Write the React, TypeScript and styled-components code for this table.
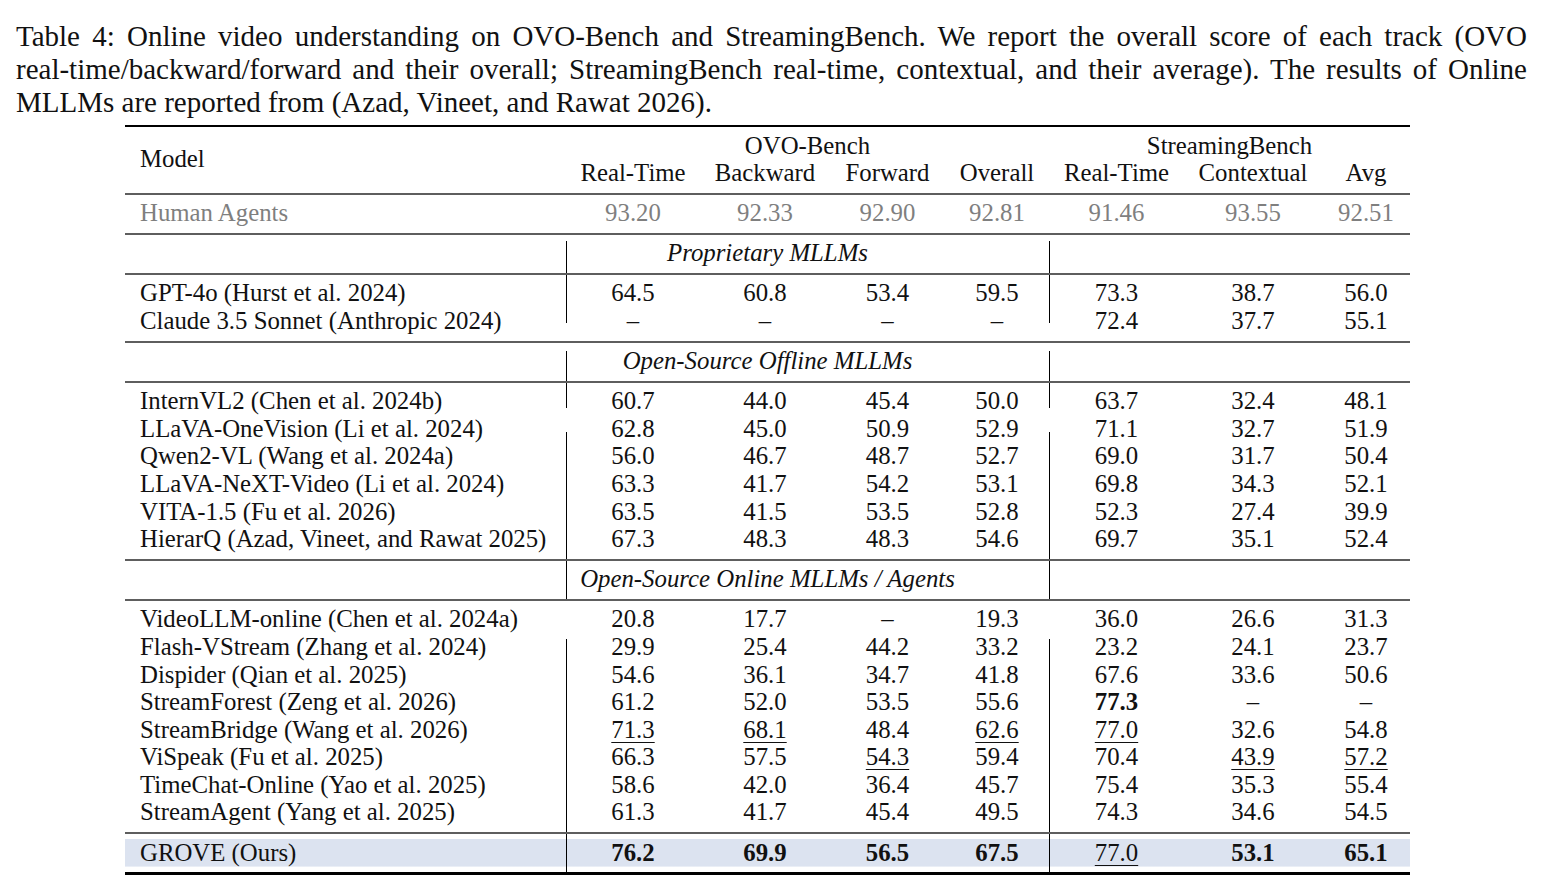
import React from 'react'
import styled, { createGlobalStyle, css } from 'styled-components'

const COLS = '441px 134px 130px 115px 104px 135px 138px 88px'
const ROW_H = 27.6
const PAD_TOP = 4.5
const PAD_BOTTOM = 6

const GlobalStyle = createGlobalStyle`
  body {
    margin: 0;
    background: #fff;
  }
`

const Page = styled.div`
  padding: 19.5px 15px 0 16px;
  font-family: 'Liberation Serif', 'Times New Roman', serif;
  color: #111;
`
const Caption = styled.div`
  width: 1511px;
  font-size: 29px;
  line-height: 33px;
`
const CaptionLine = styled.div<{ $justify?: boolean }>`
  ${props =>
    props.$justify
      ? css`
          text-align: justify;
          text-align-last: justify;
          word-spacing: -3px;
        `
      : css`
          text-align: left;
        `}
`
const Table = styled.div`
  margin: 6.5px 0 0 109px;
  width: 1285px;
  border-top: 2px solid #000;
  border-bottom: 3px solid #000;
  font-size: 24.8px;
`
const Block = styled.div<{ $last?: boolean }>`
  border-bottom: ${props => (props.$last ? 'none' : '2px solid #5e5e5e')};
`
const HeadGrid = styled.div`
  display: grid;
  grid-template-columns: ${COLS};
  grid-template-rows: ${ROW_H}px ${ROW_H}px;
  padding: ${PAD_TOP}px 0 ${PAD_BOTTOM}px;
  line-height: ${ROW_H}px;
  text-align: center;
  white-space: nowrap;
`
const ModelHead = styled.div`
  grid-row: 1 / span 2;
  align-self: center;
  text-align: left;
  padding-left: 15px;
`
const GroupHead = styled.div<{ $span: number }>`
  grid-column: span ${props => props.$span};
`
const Row = styled.div<{ $pt: number; $pb: number; $band?: boolean; $muted?: boolean }>`
  display: grid;
  grid-template-columns: ${COLS};
  color: ${props => (props.$muted ? '#7f7f7f' : 'inherit')};
  & > * {
    padding-top: ${props => props.$pt}px;
    padding-bottom: ${props => props.$pb}px;
  }
  ${props =>
    props.$band &&
    css`
      background: linear-gradient(#dce3f0, #dce3f0) no-repeat 0 ${props.$pt}px / 100% ${ROW_H}px;
    `}
`
const Cell = styled.div<{
  $left?: boolean
  $line?: boolean
  $gapTop?: number
  $gapBottom?: number
  $span?: number
  $italic?: boolean
  $shift?: number
}>`
  height: ${ROW_H}px;
  line-height: ${ROW_H}px;
  white-space: nowrap;
  text-align: ${props => (props.$left ? 'left' : 'center')};
  padding-left: ${props => (props.$left ? '15px' : '0')};
  padding-right: ${props => props.$shift || 0}px;
  font-style: ${props => (props.$italic ? 'italic' : 'normal')};
  ${props => props.$span && `grid-column: span ${props.$span};`}
  ${props =>
    props.$line &&
    css`
      background: linear-gradient(#000, #000) no-repeat 0 ${props.$gapTop || 0}px /
        1.4px calc(100% - ${(props.$gapTop || 0) + (props.$gapBottom || 0)}px);
    `}
`
const Strong = styled.span`
  font-weight: 700;
`
const Under = styled.span`
  text-decoration: underline;
  text-decoration-thickness: 1.3px;
  text-underline-offset: 4px;
`

type Entry = { name: string; vals: string[]; gapTop?: number; gapBottom?: number; noLine?: boolean }
type Group = { title: string; titleGap: number; rows: Entry[] }

const groups: Group[] = [
  {
    title: 'Proprietary MLLMs',
    titleGap: 6,
    rows: [
      { name: 'GPT-4o (Hurst et al. 2024)', vals: ['64.5', '60.8', '53.4', '59.5', '73.3', '38.7', '56.0'] },
      {
        name: 'Claude 3.5 Sonnet (Anthropic 2024)',
        vals: ['–', '–', '–', '–', '72.4', '37.7', '55.1'],
        gapBottom: 18,
      },
    ],
  },
  {
    title: 'Open-Source Offline MLLMs',
    titleGap: 8,
    rows: [
      {
        name: 'InternVL2 (Chen et al. 2024b)',
        vals: ['60.7', '44.0', '45.4', '50.0', '63.7', '32.4', '48.1'],
        gapBottom: 7,
      },
      {
        name: 'LLaVA-OneVision (Li et al. 2024)',
        vals: ['62.8', '45.0', '50.9', '52.9', '71.1', '32.7', '51.9'],
        gapTop: 17,
      },
      { name: 'Qwen2-VL (Wang et al. 2024a)', vals: ['56.0', '46.7', '48.7', '52.7', '69.0', '31.7', '50.4'] },
      {
        name: 'LLaVA-NeXT-Video (Li et al. 2024)',
        vals: ['63.3', '41.7', '54.2', '53.1', '69.8', '34.3', '52.1'],
      },
      { name: 'VITA-1.5 (Fu et al. 2026)', vals: ['63.5', '41.5', '53.5', '52.8', '52.3', '27.4', '39.9'] },
      {
        name: 'HierarQ (Azad, Vineet, and Rawat 2025)',
        vals: ['67.3', '48.3', '48.3', '54.6', '69.7', '35.1', '52.4'],
      },
    ],
  },
  {
    title: 'Open-Source Online MLLMs / Agents',
    titleGap: 0,
    rows: [
      {
        name: 'VideoLLM-online (Chen et al. 2024a)',
        vals: ['20.8', '17.7', '–', '19.3', '36.0', '26.6', '31.3'],
        noLine: true,
      },
      {
        name: 'Flash-VStream (Zhang et al. 2024)',
        vals: ['29.9', '25.4', '44.2', '33.2', '23.2', '24.1', '23.7'],
        gapTop: 6,
      },
      { name: 'Dispider (Qian et al. 2025)', vals: ['54.6', '36.1', '34.7', '41.8', '67.6', '33.6', '50.6'] },
      {
        name: 'StreamForest (Zeng et al. 2026)',
        vals: ['61.2', '52.0', '53.5', '55.6', '**77.3**', '–', '–'],
      },
      {
        name: 'StreamBridge (Wang et al. 2026)',
        vals: ['_71.3_', '_68.1_', '48.4', '_62.6_', '_77.0_', '32.6', '54.8'],
      },
      { name: 'ViSpeak (Fu et al. 2025)', vals: ['66.3', '57.5', '_54.3_', '59.4', '70.4', '_43.9_', '_57.2_'] },
      {
        name: 'TimeChat-Online (Yao et al. 2025)',
        vals: ['58.6', '42.0', '36.4', '45.7', '75.4', '35.3', '55.4'],
      },
      {
        name: 'StreamAgent (Yang et al. 2025)',
        vals: ['61.3', '41.7', '45.4', '49.5', '74.3', '34.6', '54.5'],
      },
    ],
  },
]

const human = ['93.20', '92.33', '92.90', '92.81', '91.46', '93.55', '92.51']
const ours = ['**76.2**', '**69.9**', '**56.5**', '**67.5**', '_77.0_', '**53.1**', '**65.1**']

const Value: React.FC<{ raw: string }> = ({ raw }) => {
  if (raw.startsWith('**')) return <Strong>{raw.slice(2, -2)}</Strong>
  if (raw.startsWith('_')) return <Under>{raw.slice(1, -1)}</Under>
  return <>{raw}</>
}

// the two ruled columns are the first of each benchmark
const ruled = (i: number) => i === 0 || i === 4

const DataRow: React.FC<{ entry: Entry; pt: number; pb: number; band?: boolean; muted?: boolean }> = ({
  entry,
  pt,
  pb,
  band,
  muted,
}) => (
  <Row $pt={pt} $pb={pb} $band={band} $muted={muted}>
    <Cell $left>{entry.name}</Cell>
    {entry.vals.map((v, i) => (
      <Cell
        key={i}
        $line={!muted && !entry.noLine && ruled(i)}
        $gapTop={entry.gapTop}
        $gapBottom={entry.gapBottom}
      >
        <Value raw={v} />
      </Cell>
    ))}
  </Row>
)

const App: React.FC = () => (
  <Page>
    <GlobalStyle />
    <Caption>
      <CaptionLine $justify>
        Table 4: Online video understanding on OVO-Bench and StreamingBench. We report the overall score of each
        track (OVO
      </CaptionLine>
      <CaptionLine $justify>
        real-time/backward/forward and their overall; StreamingBench real-time, contextual, and their average). The
        results of Online
      </CaptionLine>
      <CaptionLine>MLLMs are reported from (Azad, Vineet, and Rawat 2026).</CaptionLine>
    </Caption>

    <Table>
      <Block>
        <HeadGrid>
          <ModelHead>Model</ModelHead>
          <GroupHead $span={4}>OVO-Bench</GroupHead>
          <GroupHead $span={3}>StreamingBench</GroupHead>
          {['Real-Time', 'Backward', 'Forward', 'Overall', 'Real-Time', 'Contextual', 'Avg'].map((h, i) => (
            <div key={i}>{h}</div>
          ))}
        </HeadGrid>
      </Block>

      <Block>
        <DataRow entry={{ name: 'Human Agents', vals: human }} pt={PAD_TOP} pb={PAD_BOTTOM} muted />
      </Block>

      {groups.map(g => (
        <React.Fragment key={g.title}>
          <Block>
            <Row $pt={PAD_TOP} $pb={PAD_BOTTOM}>
              <Cell />
              <Cell $span={4} $italic $shift={80} $line $gapTop={g.titleGap}>
                {g.title}
              </Cell>
              <Cell $span={3} $line $gapTop={g.titleGap} />
            </Row>
          </Block>
          <Block>
            {g.rows.map((r, i) => (
              <DataRow
                key={r.name}
                entry={r}
                pt={i === 0 ? PAD_TOP : 0}
                pb={i === g.rows.length - 1 ? PAD_BOTTOM : 0}
              />
            ))}
          </Block>
        </React.Fragment>
      ))}

      <Block $last>
        <DataRow entry={{ name: 'GROVE (Ours)', vals: ours }} pt={PAD_TOP} pb={PAD_BOTTOM} band />
      </Block>
    </Table>
  </Page>
)

export default App
